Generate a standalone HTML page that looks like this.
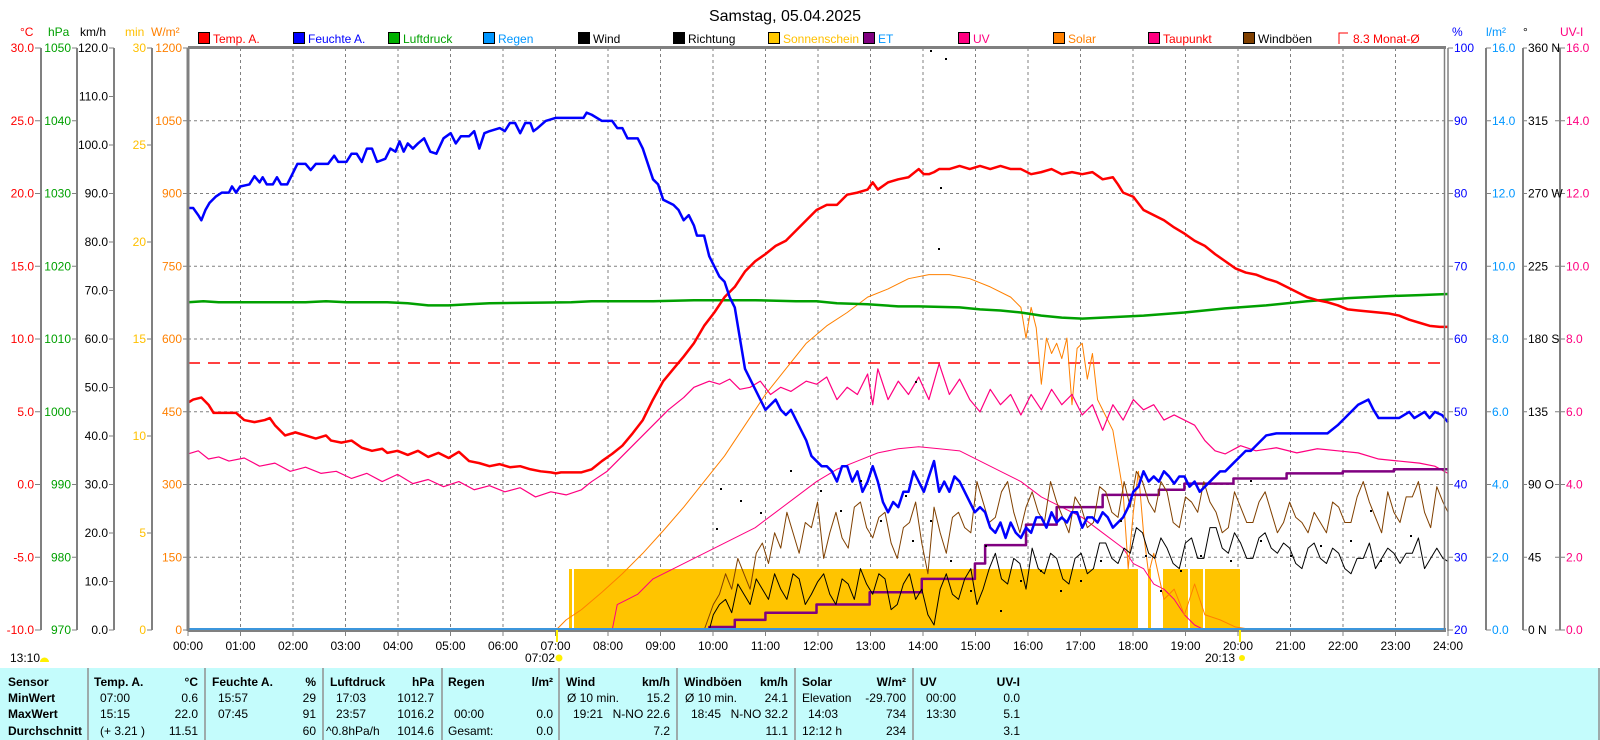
<!DOCTYPE html>
<html><head><meta charset="utf-8"><style>
html,body{margin:0;padding:0;background:#fff;width:1600px;height:740px;overflow:hidden}
svg{display:block;font-family:"Liberation Sans",sans-serif}
.t{font-size:12px}
.b{font-weight:bold}
</style></head><body>
<svg width="1600" height="740" xmlns="http://www.w3.org/2000/svg">
<text x="785" y="21" font-size="16" text-anchor="middle">Samstag, 05.04.2025</text>
<g class="t">
<rect x="198.5" y="32.5" width="11" height="11" fill="#FF0000" stroke="#000"/><text x="213" y="43" fill="#FF0000">Temp. A.</text>
<rect x="293.5" y="32.5" width="11" height="11" fill="#0000FF" stroke="#000"/><text x="308" y="43" fill="#0000FF">Feuchte A.</text>
<rect x="388.5" y="32.5" width="11" height="11" fill="#00B000" stroke="#000"/><text x="403" y="43" fill="#00A000">Luftdruck</text>
<rect x="483.5" y="32.5" width="11" height="11" fill="#0096FF" stroke="#000"/><text x="498" y="43" fill="#0096FF">Regen</text>
<rect x="578.5" y="32.5" width="11" height="11" fill="#000" stroke="#000"/><text x="593" y="43">Wind</text>
<rect x="673.5" y="32.5" width="11" height="11" fill="#000" stroke="#000"/><text x="688" y="43">Richtung</text>
<rect x="768.5" y="32.5" width="11" height="11" fill="#FFC800" stroke="#000"/><text x="783" y="43" fill="#FFC000">Sonnenschein</text>
<rect x="863.5" y="32.5" width="11" height="11" fill="#800080" stroke="#000"/><text x="878" y="43" fill="#0096FF">ET</text>
<rect x="958.5" y="32.5" width="11" height="11" fill="#FF0080" stroke="#000"/><text x="973" y="43" fill="#FF0080">UV</text>
<rect x="1053.5" y="32.5" width="11" height="11" fill="#FF8000" stroke="#000"/><text x="1068" y="43" fill="#FF8000">Solar</text>
<rect x="1148.5" y="32.5" width="11" height="11" fill="#FF0080" stroke="#000"/><text x="1163" y="43" fill="#FF0000">Taupunkt</text>
<rect x="1243.5" y="32.5" width="11" height="11" fill="#804000" stroke="#000"/><text x="1258" y="43">Windböen</text>
<path d="M1339 44V33H1348" fill="none" stroke="#FF0000"/><text x="1353" y="43" fill="#FF0000">8.3 Monat-Ø</text>
</g>
<g class="t">
<text x="20" y="36" fill="#FF0000">°C</text>
<text x="48" y="36" fill="#00A000">hPa</text>
<text x="80" y="36">km/h</text>
<text x="125" y="36" fill="#FFC000">min</text>
<text x="151" y="36" fill="#FF8000">W/m²</text>
<text x="1452" y="36" fill="#0000FF">%</text>
<text x="1486" y="36" fill="#0096FF">l/m²</text>
<text x="1523" y="36">°</text>
<text x="1560" y="36" fill="#FF0080">UV-I</text>
</g>
<g stroke="#808080" stroke-dasharray="3,3" stroke-width="1">
<path d="M188 120.75H1446M188 193.5H1446M188 266.25H1446M188 339H1446M188 411.75H1446M188 484.5H1446M188 557.25H1446"/>
<path d="M240.5 48V630M293 48V630M345.5 48V630M398 48V630M450.5 48V630M503 48V630M555.5 48V630M608 48V630M660.5 48V630M713 48V630M765.5 48V630M818 48V630M870.5 48V630M923 48V630M975.5 48V630M1028 48V630M1080.5 48V630M1133 48V630M1185.5 48V630M1238 48V630M1290.5 48V630M1343 48V630M1395.5 48V630"/>
</g>
<g fill="#FFC400">
<rect x="569" y="569" width="569" height="61"/>
<rect x="1148" y="569" width="3" height="61"/>
<rect x="1163" y="569" width="25" height="61"/>
<rect x="1190" y="569" width="13" height="61"/>
<rect x="1205" y="569" width="35" height="61"/>
</g>
<rect x="572" y="569" width="2" height="61" fill="#fff"/>
<path d="M188 363H1446" stroke="#FF0000" stroke-width="1.5" stroke-dasharray="12,8"/>
<g transform="matrix(1.0219 0 0 1.0246 -1 0)" fill="none" stroke-linejoin="round">
<polyline vector-effect="non-scaling-stroke" stroke="#FF0080" stroke-width="1" points="600,615 605,590 615,585 625,580 640,565 660,555 680,545 700,535 720,525 740,515 760,500 780,485 800,470 820,458 840,450 860,442 880,438 900,436 920,438 940,440 960,450 980,460 1000,470 1020,485 1040,495 1060,505 1080,520 1100,535 1110,550 1120,555 1130,570 1140,575 1150,585 1160,600 1170,610 1180,615"/>
<polyline vector-effect="non-scaling-stroke" stroke="#FF8000" stroke-width="1" points="545,615 555,605 570,595 590,578 610,560 630,540 650,518 670,495 690,470 710,445 730,415 750,385 770,360 790,335 810,318 830,305 850,290 870,282 890,272 910,268 930,268 950,272 970,280 990,290 1000,300 1005,330 1010,300 1015,320 1020,375 1025,330 1030,345 1035,335 1040,350 1045,330 1050,395 1055,340 1060,335 1065,370 1070,345 1075,390 1080,400 1090,420 1100,480 1105,555 1110,500 1115,460 1120,520 1125,560 1130,540 1140,585 1150,575 1160,600 1170,570 1180,600 1195,605 1210,612 1230,615"/>
<polyline vector-effect="non-scaling-stroke" stroke="#FF0080" stroke-width="1.2" points="185,443 195,440 205,448 215,446 225,450 240,447 255,455 270,452 285,460 300,456 315,462 330,460 345,467 360,462 375,470 390,463 405,472 420,468 435,475 450,470 465,478 480,474 495,480 510,476 525,485 540,480 555,483 570,478 580,470 595,460 610,445 625,430 640,415 655,400 670,388 680,378 695,372 705,375 715,370 725,380 735,378 745,372 755,385 765,378 775,382 790,372 800,375 810,368 820,390 830,378 840,385 850,365 855,395 860,360 870,390 880,372 890,385 900,368 910,390 920,355 930,385 940,370 950,390 960,402 970,380 980,395 990,385 1000,405 1010,385 1020,400 1030,380 1040,395 1050,385 1060,405 1070,395 1080,420 1090,395 1100,410 1110,390 1120,400 1130,395 1140,410 1150,405 1160,410 1170,415 1180,430 1190,440 1200,443 1215,435 1230,440 1250,437 1270,442 1290,438 1310,440 1330,442 1350,448 1370,450 1390,452 1405,455 1418,462"/>
<polyline vector-effect="non-scaling-stroke" stroke="#800080" stroke-width="2.5" points="645,615 695,615 695,612 720,612 720,605 750,605 750,598 800,598 800,590 852,590 852,578 903,578 903,565 955,565 955,550 965,550 965,532 1005,532 1005,512 1035,512 1035,495 1080,495 1080,483 1135,483 1135,478 1160,478 1160,472 1208,472 1208,467 1260,467 1260,462 1315,462 1315,460 1365,460 1365,458 1418,458"/>
<polyline vector-effect="non-scaling-stroke" stroke="#804000" stroke-width="1" points="660,615 690,615 699,590 705,580 711,560 717,575 723,545 729,560 735,575 741,540 747,530 753,550 759,520 765,535 771,500 777,520 783,540 789,510 795,515 801,490 807,545 813,520 819,500 825,525 831,535 837,495 843,490 849,515 855,525 861,505 867,500 873,530 879,545 885,515 891,510 897,490 903,530 909,560 915,495 921,520 927,540 933,505 939,500 945,515 951,520 957,470 963,490 969,510 975,505 981,480 987,470 993,500 999,520 1005,495 1011,480 1017,500 1023,510 1029,470 1035,490 1041,505 1047,520 1053,485 1059,495 1065,515 1071,510 1077,475 1083,480 1089,500 1095,505 1101,470 1107,495 1113,460 1119,470 1125,490 1131,500 1137,470 1143,480 1149,510 1155,515 1161,485 1167,490 1173,500 1179,470 1185,490 1191,500 1197,520 1203,515 1209,480 1215,495 1221,510 1227,510 1233,490 1239,480 1245,500 1251,520 1257,510 1263,490 1269,505 1275,510 1281,520 1287,500 1293,510 1299,520 1305,490 1311,495 1317,510 1323,510 1329,485 1335,470 1341,490 1347,505 1353,520 1359,480 1365,500 1371,510 1377,485 1383,485 1389,470 1395,500 1401,515 1407,475 1413,490 1418,500"/>
<polyline vector-effect="non-scaling-stroke" stroke="#000" stroke-width="1" points="660,615 695,615 699,600 705,590 711,585 717,598 723,570 729,580 735,590 741,565 747,575 753,585 759,560 765,575 771,585 777,560 783,565 789,590 795,580 801,568 807,560 813,580 819,590 825,565 831,570 837,585 843,555 849,570 855,580 861,560 867,565 873,595 879,590 885,570 891,560 897,585 903,575 909,600 915,610 921,575 927,560 933,580 939,585 945,565 951,555 957,590 963,575 969,555 975,540 981,565 987,570 993,545 999,550 1005,575 1011,535 1017,555 1023,560 1029,540 1035,545 1041,565 1047,570 1053,545 1059,540 1065,560 1071,555 1077,530 1083,530 1089,545 1095,550 1101,535 1107,540 1113,515 1119,520 1125,540 1131,545 1137,525 1143,535 1149,550 1155,555 1161,530 1167,525 1173,545 1179,545 1185,515 1191,515 1197,535 1203,540 1209,520 1215,530 1221,545 1227,545 1233,525 1239,520 1245,535 1251,540 1257,530 1263,535 1269,550 1275,555 1281,535 1287,530 1293,545 1299,550 1305,535 1311,540 1317,555 1323,560 1329,545 1335,545 1341,530 1347,555 1353,545 1359,535 1365,540 1371,550 1377,540 1383,540 1389,525 1395,555 1401,545 1407,535 1413,545 1418,548"/>
<polyline vector-effect="non-scaling-stroke" stroke="#00A000" stroke-width="2.5" points="185,295 200,294 215,295 300,295 320,294 340,295 380,295 400,296 420,298 440,298 460,297 480,296 560,295 580,294 640,294 680,293 740,293 780,294 800,294 820,296 850,297 880,299 900,299 940,300 960,302 980,303 1000,305 1020,308 1040,310 1060,311 1080,310 1100,309 1120,308 1160,305 1200,301 1240,298 1280,294 1320,291 1360,289 1390,288 1418,287"/>
<polyline vector-effect="non-scaling-stroke" stroke="#FF0000" stroke-width="2.5" points="185,393 190,390 198,388 205,395 210,403 225,403 232,403 240,410 250,412 260,410 265,408 270,415 280,425 290,422 300,425 310,428 320,425 325,430 335,432 345,430 355,437 365,440 375,438 380,442 390,440 400,444 410,440 420,446 430,442 440,447 450,441 460,450 470,452 480,455 490,453 500,456 510,455 520,458 530,460 540,461 545,462 550,461 560,461 570,461 580,458 590,450 600,443 610,435 620,423 630,410 640,390 650,372 660,360 670,348 680,335 690,318 700,305 710,290 720,280 730,265 740,255 750,248 760,240 770,235 780,225 790,215 800,205 810,200 820,200 830,190 840,188 850,185 855,178 860,185 870,178 880,175 890,173 900,165 905,170 910,170 915,168 920,165 930,165 940,162 950,165 960,162 970,165 980,162 990,165 1000,165 1010,170 1020,168 1030,165 1040,170 1050,168 1060,170 1070,168 1080,175 1090,173 1095,180 1100,188 1110,192 1120,205 1130,210 1140,215 1150,222 1160,228 1170,235 1180,240 1190,248 1200,255 1210,262 1220,266 1230,268 1240,272 1250,275 1260,280 1270,285 1280,290 1290,293 1300,295 1310,298 1320,302 1330,303 1340,304 1350,305 1360,306 1370,308 1380,312 1390,315 1400,318 1410,319 1418,319"/>
<polyline vector-effect="non-scaling-stroke" stroke="#0000FF" stroke-width="2.5" points="185,203 190,203 195,210 198,215 202,205 206,198 212,192 218,188 225,188 228,182 232,188 236,182 245,180 250,172 255,178 258,173 262,180 268,180 272,173 276,180 282,180 288,168 292,160 300,160 305,166 310,160 322,160 328,152 332,158 340,158 345,150 350,150 355,158 360,145 365,145 370,158 378,155 383,145 388,148 392,138 396,148 400,140 405,145 410,140 416,135 422,148 428,150 435,135 442,130 447,140 452,133 460,133 465,128 470,145 475,130 480,128 490,125 495,128 500,120 505,120 510,130 515,120 520,120 523,128 527,125 535,118 545,115 555,115 565,115 572,115 575,110 580,112 590,118 600,118 605,125 610,125 615,135 625,135 630,145 635,160 640,175 645,180 650,195 660,200 665,205 670,215 675,210 680,220 683,230 690,230 695,250 700,260 705,270 710,275 715,290 720,300 725,330 730,360 735,370 740,380 745,390 750,400 755,395 760,390 765,400 770,405 775,400 780,410 785,420 790,430 795,445 800,450 805,455 810,455 815,460 820,470 825,455 830,455 835,470 840,460 845,480 850,470 855,455 860,470 865,490 870,500 875,490 880,495 885,480 890,480 895,460 900,470 905,480 910,465 915,450 920,480 925,470 930,480 935,465 940,470 945,480 950,490 955,500 960,495 965,500 970,515 975,520 980,510 985,525 990,510 995,520 1000,525 1005,515 1010,520 1015,505 1020,505 1025,515 1030,500 1035,510 1040,505 1045,510 1050,500 1055,500 1060,515 1065,505 1070,505 1075,510 1080,500 1085,505 1090,515 1095,510 1100,505 1105,495 1110,480 1115,475 1120,460 1125,470 1130,465 1135,470 1140,460 1145,465 1150,472 1155,465 1160,465 1165,475 1170,470 1175,480 1180,475 1185,470 1190,465 1195,460 1200,460 1205,455 1210,450 1215,445 1220,440 1225,440 1230,435 1235,430 1240,425 1250,423 1300,423 1310,415 1320,405 1330,395 1340,390 1345,400 1350,408 1370,408 1380,402 1385,408 1395,402 1400,408 1405,402 1412,405 1418,412"/>
</g>
<g fill="#000">
<rect x="930" y="50" width="2" height="2"/><rect x="945" y="58" width="2" height="2"/><rect x="940" y="187" width="2" height="2"/><rect x="938" y="248" width="2" height="2"/><rect x="915" y="381" width="2" height="2"/>
<rect x="720" y="488" width="2" height="2"/><rect x="740" y="500" width="2" height="2"/><rect x="716" y="528" width="2" height="2"/><rect x="760" y="512" width="2" height="2"/><rect x="790" y="470" width="2" height="2"/><rect x="820" y="490" width="2" height="2"/><rect x="840" y="510" width="2" height="2"/><rect x="860" y="480" width="2" height="2"/><rect x="880" y="520" width="2" height="2"/>
<rect x="905" y="495" width="2" height="2"/><rect x="912" y="540" width="2" height="2"/><rect x="930" y="520" width="2" height="2"/><rect x="950" y="560" width="2" height="2"/><rect x="970" y="590" width="2" height="2"/><rect x="985" y="545" width="2" height="2"/><rect x="1000" y="610" width="2" height="2"/><rect x="1020" y="580" width="2" height="2"/><rect x="1040" y="570" width="2" height="2"/><rect x="1060" y="590" width="2" height="2"/><rect x="1080" y="580" width="2" height="2"/><rect x="1100" y="560" width="2" height="2"/><rect x="1120" y="520" width="2" height="2"/><rect x="1145" y="555" width="2" height="2"/><rect x="1160" y="590" width="2" height="2"/><rect x="1180" y="570" width="2" height="2"/><rect x="1200" y="555" width="2" height="2"/><rect x="1230" y="560" width="2" height="2"/><rect x="1260" y="540" width="2" height="2"/><rect x="1290" y="555" width="2" height="2"/><rect x="1320" y="545" width="2" height="2"/><rect x="1350" y="540" width="2" height="2"/><rect x="1380" y="560" width="2" height="2"/><rect x="1410" y="535" width="2" height="2"/><rect x="1250" y="480" width="2" height="2"/><rect x="1370" y="510" width="2" height="2"/>
</g>
<path d="M188 629H1446" stroke="#3C96DC" stroke-width="2"/>
<path d="M188 48V631" stroke="#808080" stroke-width="3"/>
<path d="M188 47.5H1446" stroke="#808080" stroke-width="3"/>
<path d="M188 631H1446" stroke="#808080" stroke-width="2"/>
<path d="M1444.5 48V631M1448 48V631" stroke="#808080" stroke-width="1.5"/>
<g stroke="#808080" stroke-width="2">
<path d="M41 48V630M77 48V630M114 48V630M152 48V630M1486 48V630M1523 48V630M1560 48V630"/>
</g>
<g stroke="#808080" stroke-width="1">
<path d="M35 48H41M35 120.75H41M35 193.5H41M35 266.25H41M35 339H41M35 411.75H41M35 484.5H41M35 557.25H41M35 630H41"/>
<path d="M72 48H77M72 120.75H77M72 193.5H77M72 266.25H77M72 339H77M72 411.75H77M72 484.5H77M72 557.25H77M72 630H77"/>
<path d="M109 48H114M109 96.5H114M109 145H114M109 193.5H114M109 242H114M109 290.5H114M109 339H114M109 387.5H114M109 436H114M109 484.5H114M109 533H114M109 581.5H114M109 630H114"/>
<path d="M147 48H152M147 145H152M147 242H152M147 339H152M147 436H152M147 533H152M147 630H152"/>
<path d="M183 48H188M183 120.75H188M183 193.5H188M183 266.25H188M183 339H188M183 411.75H188M183 484.5H188M183 557.25H188M183 630H188"/>
<path d="M1448 48H1453M1448 120.75H1453M1448 193.5H1453M1448 266.25H1453M1448 339H1453M1448 411.75H1453M1448 484.5H1453M1448 557.25H1453M1448 630H1453"/>
<path d="M1486 48H1491M1486 120.75H1491M1486 193.5H1491M1486 266.25H1491M1486 339H1491M1486 411.75H1491M1486 484.5H1491M1486 557.25H1491M1486 630H1491"/>
<path d="M1523 48H1527M1523 120.75H1527M1523 193.5H1527M1523 266.25H1527M1523 339H1527M1523 411.75H1527M1523 484.5H1527M1523 557.25H1527M1523 630H1527"/>
<path d="M1555 48H1560M1555 120.75H1560M1555 193.5H1560M1555 266.25H1560M1555 339H1560M1555 411.75H1560M1555 484.5H1560M1555 557.25H1560M1555 630H1560"/>
<path d="M1560 48H1565M1560 120.75H1565M1560 193.5H1565M1560 266.25H1565M1560 339H1565M1560 411.75H1565M1560 484.5H1565M1560 557.25H1565M1560 630H1565"/>
</g>
<g class="t" text-anchor="end" dominant-baseline="central">
<g fill="#FF0000"><text x="34" y="48">30.0</text><text x="34" y="120.75">25.0</text><text x="34" y="193.5">20.0</text><text x="34" y="266.25">15.0</text><text x="34" y="339">10.0</text><text x="34" y="411.75">5.0</text><text x="34" y="484.5">0.0</text><text x="34" y="557.25">-5.0</text><text x="34" y="630">-10.0</text></g>
<g fill="#00A000"><text x="71" y="48">1050</text><text x="71" y="120.75">1040</text><text x="71" y="193.5">1030</text><text x="71" y="266.25">1020</text><text x="71" y="339">1010</text><text x="71" y="411.75">1000</text><text x="71" y="484.5">990</text><text x="71" y="557.25">980</text><text x="71" y="630">970</text></g>
<g fill="#000"><text x="108" y="48">120.0</text><text x="108" y="96.5">110.0</text><text x="108" y="145">100.0</text><text x="108" y="193.5">90.0</text><text x="108" y="242">80.0</text><text x="108" y="290.5">70.0</text><text x="108" y="339">60.0</text><text x="108" y="387.5">50.0</text><text x="108" y="436">40.0</text><text x="108" y="484.5">30.0</text><text x="108" y="533">20.0</text><text x="108" y="581.5">10.0</text><text x="108" y="630">0.0</text></g>
<g fill="#FFC000"><text x="146" y="48">30</text><text x="146" y="145">25</text><text x="146" y="242">20</text><text x="146" y="339">15</text><text x="146" y="436">10</text><text x="146" y="533">5</text><text x="146" y="630">0</text></g>
<g fill="#FF8000"><text x="182" y="48">1200</text><text x="182" y="120.75">1050</text><text x="182" y="193.5">900</text><text x="182" y="266.25">750</text><text x="182" y="339">600</text><text x="182" y="411.75">450</text><text x="182" y="484.5">300</text><text x="182" y="557.25">150</text><text x="182" y="630">0</text></g>
</g>
<g class="t" dominant-baseline="central">
<g fill="#0000FF"><text x="1454" y="48">100</text><text x="1454" y="120.75">90</text><text x="1454" y="193.5">80</text><text x="1454" y="266.25">70</text><text x="1454" y="339">60</text><text x="1454" y="411.75">50</text><text x="1454" y="484.5">40</text><text x="1454" y="557.25">30</text><text x="1454" y="630">20</text></g>
<g fill="#0096FF"><text x="1492" y="48">16.0</text><text x="1492" y="120.75">14.0</text><text x="1492" y="193.5">12.0</text><text x="1492" y="266.25">10.0</text><text x="1492" y="339">8.0</text><text x="1492" y="411.75">6.0</text><text x="1492" y="484.5">4.0</text><text x="1492" y="557.25">2.0</text><text x="1492" y="630">0.0</text></g>
<g fill="#000"><text x="1528" y="48">360 N</text><text x="1528" y="120.75">315</text><text x="1528" y="193.5">270 W</text><text x="1528" y="266.25">225</text><text x="1528" y="339">180 S</text><text x="1528" y="411.75">135</text><text x="1528" y="484.5">90  O</text><text x="1528" y="557.25">45</text><text x="1528" y="630">0    N</text></g>
<g fill="#FF0080"><text x="1566" y="48">16.0</text><text x="1566" y="120.75">14.0</text><text x="1566" y="193.5">12.0</text><text x="1566" y="266.25">10.0</text><text x="1566" y="339">8.0</text><text x="1566" y="411.75">6.0</text><text x="1566" y="484.5">4.0</text><text x="1566" y="557.25">2.0</text><text x="1566" y="630">0.0</text></g>
</g>
<g stroke="#808080"><path d="M188 631V636M240.5 631V636M293 631V636M345.5 631V636M398 631V636M450.5 631V636M503 631V636M555.5 631V636M608 631V636M660.5 631V636M713 631V636M765.5 631V636M818 631V636M870.5 631V636M923 631V636M975.5 631V636M1028 631V636M1080.5 631V636M1133 631V636M1185.5 631V636M1238 631V636M1290.5 631V636M1343 631V636M1395.5 631V636M1448 631V636"/></g>
<g class="t" text-anchor="middle">
<text x="188" y="650">00:00</text><text x="240.5" y="650">01:00</text><text x="293" y="650">02:00</text><text x="345.5" y="650">03:00</text><text x="398" y="650">04:00</text><text x="450.5" y="650">05:00</text><text x="503" y="650">06:00</text><text x="555.5" y="650">07:00</text><text x="608" y="650">08:00</text><text x="660.5" y="650">09:00</text><text x="713" y="650">10:00</text><text x="765.5" y="650">11:00</text><text x="818" y="650">12:00</text><text x="870.5" y="650">13:00</text><text x="923" y="650">14:00</text><text x="975.5" y="650">15:00</text><text x="1028" y="650">16:00</text><text x="1080.5" y="650">17:00</text><text x="1133" y="650">18:00</text><text x="1185.5" y="650">19:00</text><text x="1238" y="650">20:00</text><text x="1290.5" y="650">21:00</text><text x="1343" y="650">22:00</text><text x="1395.5" y="650">23:00</text><text x="1448" y="650">24:00</text>
</g>
<rect x="556" y="630" width="2" height="12" fill="#FFF000"/>
<rect x="1239" y="630" width="2" height="12" fill="#FFF000"/>
<g class="t">
<text x="10" y="662">13:10</text><path d="M40 662A4.5 4.5 0 0 1 49 662Z" fill="#FFF000"/>
<text x="525" y="662">07:02</text><circle cx="559" cy="658" r="3.5" fill="#FFF000"/>
<text x="1205" y="662">20:13</text><circle cx="1242" cy="658" r="3" fill="#FFF000"/>
</g>
<rect x="0" y="668" width="1600" height="72" fill="#C4FCFC"/>
<g stroke="#909090" stroke-width="1.5"><path d="M88 668V740M205 668V740M323 668V740M442 668V740M559 668V740M677 668V740M795 668V740M913 668V740M1599 668V740"/></g>
<g class="t">
<g class="b"><text x="8" y="686">Sensor</text><text x="8" y="702">MinWert</text><text x="8" y="718">MaxWert</text><text x="8" y="735">Durchschnitt</text>
<text x="94" y="686">Temp. A.</text><text x="198" y="686" text-anchor="end">°C</text>
<text x="212" y="686">Feuchte A.</text><text x="316" y="686" text-anchor="end">%</text>
<text x="330" y="686">Luftdruck</text><text x="434" y="686" text-anchor="end">hPa</text>
<text x="448" y="686">Regen</text><text x="553" y="686" text-anchor="end">l/m²</text>
<text x="566" y="686">Wind</text><text x="670" y="686" text-anchor="end">km/h</text>
<text x="684" y="686">Windböen</text><text x="788" y="686" text-anchor="end">km/h</text>
<text x="802" y="686">Solar</text><text x="906" y="686" text-anchor="end">W/m²</text>
<text x="920" y="686">UV</text><text x="1020" y="686" text-anchor="end">UV-I</text></g>
<text x="100" y="702">07:00</text><text x="198" y="702" text-anchor="end">0.6</text>
<text x="100" y="718">15:15</text><text x="198" y="718" text-anchor="end">22.0</text>
<text x="100" y="735">(+ 3.21 )</text><text x="198" y="735" text-anchor="end">11.51</text>
<text x="218" y="702">15:57</text><text x="316" y="702" text-anchor="end">29</text>
<text x="218" y="718">07:45</text><text x="316" y="718" text-anchor="end">91</text>
<text x="316" y="735" text-anchor="end">60</text>
<text x="336" y="702">17:03</text><text x="434" y="702" text-anchor="end">1012.7</text>
<text x="336" y="718">23:57</text><text x="434" y="718" text-anchor="end">1016.2</text>
<text x="326" y="735">^0.8hPa/h</text><text x="434" y="735" text-anchor="end">1014.6</text>
<text x="454" y="718">00:00</text><text x="553" y="718" text-anchor="end">0.0</text>
<text x="448" y="735">Gesamt:</text><text x="553" y="735" text-anchor="end">0.0</text>
<text x="567" y="702">Ø 10 min.</text><text x="670" y="702" text-anchor="end">15.2</text>
<text x="573" y="718">19:21</text><text x="670" y="718" text-anchor="end">N-NO 22.6</text>
<text x="670" y="735" text-anchor="end">7.2</text>
<text x="685" y="702">Ø 10 min.</text><text x="788" y="702" text-anchor="end">24.1</text>
<text x="691" y="718">18:45</text><text x="788" y="718" text-anchor="end">N-NO 32.2</text>
<text x="788" y="735" text-anchor="end">11.1</text>
<text x="802" y="702">Elevation</text><text x="906" y="702" text-anchor="end">-29.700</text>
<text x="808" y="718">14:03</text><text x="906" y="718" text-anchor="end">734</text>
<text x="802" y="735">12:12 h</text><text x="906" y="735" text-anchor="end">234</text>
<text x="926" y="702">00:00</text><text x="1020" y="702" text-anchor="end">0.0</text>
<text x="926" y="718">13:30</text><text x="1020" y="718" text-anchor="end">5.1</text>
<text x="1020" y="735" text-anchor="end">3.1</text>
</g>
</svg>
</body></html>
